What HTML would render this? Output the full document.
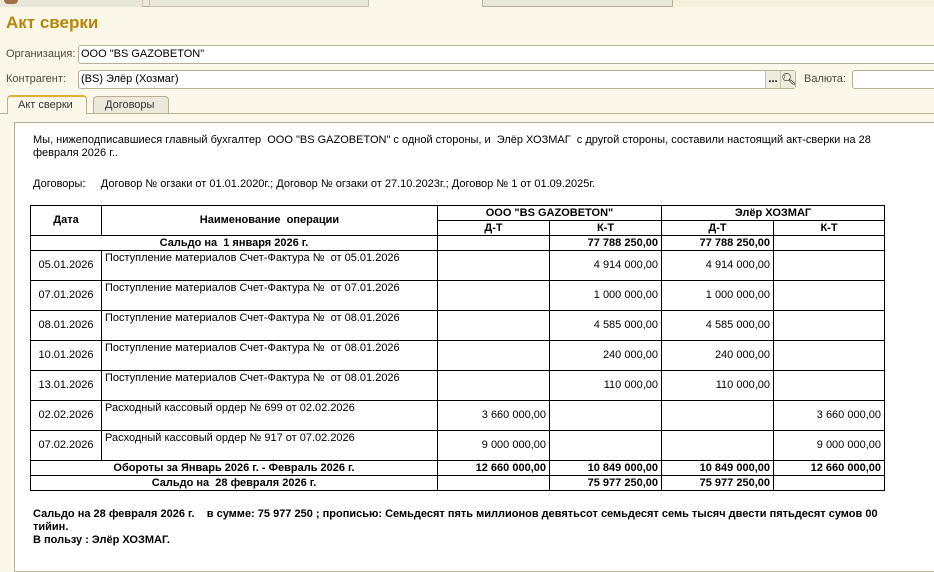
<!DOCTYPE html>
<html><head><meta charset="utf-8"><style>
*{margin:0;padding:0;box-sizing:border-box}
body{width:934px;height:563px;overflow:hidden;background:#fbf8e9;font-family:"Liberation Sans",Arial,sans-serif;position:relative;font-size:11px;color:#000}
.a{position:absolute}
.inp{position:absolute;background:#fff;border:1px solid #b8b095;border-radius:3px}
.lbl{position:absolute;color:#4a4a3a;font-size:11px}
table{position:absolute;left:30px;top:205px;border-collapse:collapse;font-size:11px}
td{border:1px solid #000;padding:0 3px;height:15px;line-height:13px}
.r{text-align:right}.c{text-align:center}.b{font-weight:bold}
.tall td{height:30px}
.tall td.n{vertical-align:top;padding-top:1px}
</style></head><body>
<div class="a" style="left:0;top:0;width:934px;height:7px;background:#ece8da;border-bottom:1px solid #b8b095"></div>
<div class="a" style="left:0;top:0;width:143px;height:7px;background:#e9e6da;border-right:1px solid #c8c0a8"></div>
<div class="a" style="left:4px;top:0;width:14px;height:4px;background:#a0704a;border-radius:0 0 7px 7px"></div>
<div class="a" style="left:149px;top:0;width:220px;height:7px;background:#e9e6da;border:1px solid #c8c0a8;border-top:0"></div>
<div class="a" style="left:369px;top:0;width:113px;height:8px;background:#fbf8e9"></div>
<div class="a" style="left:482px;top:0;width:191px;height:7px;background:#e9e6da;border:1px solid #b8b095;border-top:0"></div>
<div class="a" style="left:673px;top:0;width:261px;height:7px;background:#f6f1dc"></div>
<div class="a" style="left:6px;top:13px;font-size:17px;font-weight:bold;color:#b8860b">Акт сверки</div>
<div class="lbl" style="left:6px;top:48px">Организация:</div>
<div class="inp" style="left:78px;top:45px;width:870px;height:19px"></div>
<div class="a" style="left:81px;top:48px">ООО "BS GAZOBETON"</div>
<div class="lbl" style="left:6px;top:73px">Контрагент:</div>
<div class="inp" style="left:78px;top:70px;width:718px;height:19px"></div>
<div class="a" style="left:81px;top:73px">(BS) Элёр (Хозмаг)</div>
<div class="a" style="left:765px;top:71px;width:15px;height:17px;background:#f0ecdc;border-left:1px solid #c8c0a8;font-weight:bold;text-align:center;line-height:17px">...</div>
<div class="a" style="left:780px;top:71px;width:15px;height:17px;background:#f0ecdc;border-left:1px solid #c8c0a8;text-align:center;line-height:16px;font-size:12px">&#x1F50D;&#xFE0E;</div>
<div class="lbl" style="left:804px;top:73px">Валюта:</div>
<div class="inp" style="left:852px;top:70px;width:100px;height:19px"></div>
<div class="a" style="left:0;top:113px;width:934px;height:1px;background:#b8b095"></div>
<div class="a" style="left:7px;top:95px;width:80px;height:19px;background:#fbf8e9;border:1px solid #b8b095;border-bottom:0;border-radius:4px 4px 0 0;border-top:2px solid #e0b040"></div>
<div class="lbl" style="left:18px;top:99px;color:#333">Акт сверки</div>
<div class="a" style="left:93px;top:96px;width:76px;height:17px;background:#ece8da;border:1px solid #b8b095;border-bottom:0;border-radius:4px 4px 0 0"></div>
<div class="lbl" style="left:105px;top:99px;color:#333">Договоры</div>
<div class="a" style="left:14px;top:122px;width:930px;height:450px;background:#fff;border:1px solid #b8b095"></div>
<div class="a" style="left:33px;top:134px;width:860px;line-height:13px">Мы, нижеподписавшиеся главный бухгалтер&nbsp; ООО "BS GAZOBETON" с одной стороны, и&nbsp; Элёр ХОЗМАГ&nbsp; с другой стороны, составили настоящий акт-сверки на 28 февраля 2026 г..</div>
<div class="a" style="left:33px;top:178px">Договоры:&nbsp;&nbsp;&nbsp;&nbsp; Договор № огзаки от 01.01.2020г.; Договор № огзаки от 27.10.2023г.; Договор № 1 от 01.09.2025г.</div>
<table>
<colgroup><col style="width:71px"><col style="width:336px"><col style="width:112px"><col style="width:112px"><col style="width:112px"><col style="width:111px"></colgroup>
<tr><td rowspan="2" class="c b" style="height:30px">Дата</td><td rowspan="2" class="c b">Наименование&nbsp; операции</td><td colspan="2" class="c b">ООО "BS GAZOBETON"</td><td colspan="2" class="c b">Элёр ХОЗМАГ</td></tr>
<tr><td class="c b">Д-Т</td><td class="c b">К-Т</td><td class="c b">Д-Т</td><td class="c b">К-Т</td></tr>
<tr><td colspan="2" class="c b">Сальдо на&nbsp; 1 января 2026 г.</td><td></td><td class="r b">77 788 250,00</td><td class="r b">77 788 250,00</td><td></td></tr>
<tr class="tall"><td class="c">05.01.2026</td><td class="n">Поступление материалов Счет-Фактура №&nbsp; от 05.01.2026</td><td></td><td class="r">4 914 000,00</td><td class="r">4 914 000,00</td><td></td></tr>
<tr class="tall"><td class="c">07.01.2026</td><td class="n">Поступление материалов Счет-Фактура №&nbsp; от 07.01.2026</td><td></td><td class="r">1 000 000,00</td><td class="r">1 000 000,00</td><td></td></tr>
<tr class="tall"><td class="c">08.01.2026</td><td class="n">Поступление материалов Счет-Фактура №&nbsp; от 08.01.2026</td><td></td><td class="r">4 585 000,00</td><td class="r">4 585 000,00</td><td></td></tr>
<tr class="tall"><td class="c">10.01.2026</td><td class="n">Поступление материалов Счет-Фактура №&nbsp; от 08.01.2026</td><td></td><td class="r">240 000,00</td><td class="r">240 000,00</td><td></td></tr>
<tr class="tall"><td class="c">13.01.2026</td><td class="n">Поступление материалов Счет-Фактура №&nbsp; от 08.01.2026</td><td></td><td class="r">110 000,00</td><td class="r">110 000,00</td><td></td></tr>
<tr class="tall"><td class="c">02.02.2026</td><td class="n">Расходный кассовый ордер № 699 от 02.02.2026</td><td class="r">3 660 000,00</td><td></td><td></td><td class="r">3 660 000,00</td></tr>
<tr class="tall"><td class="c">07.02.2026</td><td class="n">Расходный кассовый ордер № 917 от 07.02.2026</td><td class="r">9 000 000,00</td><td></td><td></td><td class="r">9 000 000,00</td></tr>
<tr><td colspan="2" class="c b">Обороты за Январь 2026 г. - Февраль 2026 г.</td><td class="r b">12 660 000,00</td><td class="r b">10 849 000,00</td><td class="r b">10 849 000,00</td><td class="r b">12 660 000,00</td></tr>
<tr><td colspan="2" class="c b">Сальдо на&nbsp; 28 февраля 2026 г.</td><td></td><td class="r b">75 977 250,00</td><td class="r b">75 977 250,00</td><td></td></tr>
</table>
<div class="a b" style="left:33px;top:508px;width:860px;line-height:13px">Сальдо на 28 февраля 2026 г.&nbsp;&nbsp;&nbsp; в сумме: 75 977 250 ; прописью: Семьдесят пять миллионов девятьсот семьдесят семь тысяч двести пятьдесят сумов 00 тийин.<br>В пользу : Элёр ХОЗМАГ.</div>
</body></html>
